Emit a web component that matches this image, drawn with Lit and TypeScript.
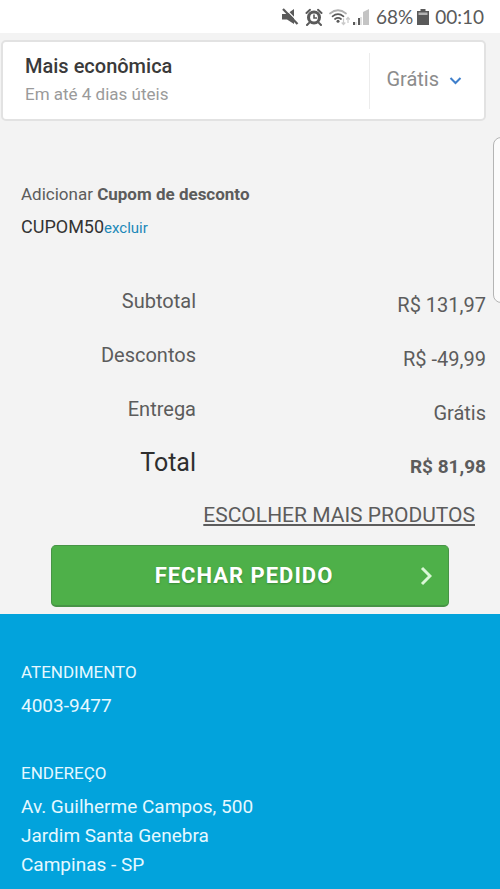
import { LitElement, html, css, svg } from "lit";
import { customElement, property } from "lit/decorators.js";
import { classMap } from "lit/directives/class-map.js";

interface SummaryLine {
  label: string;
  value: string;
  total?: boolean;
}

const LINES: SummaryLine[] = [
  { label: "Subtotal", value: "R$ 131,97" },
  { label: "Descontos", value: "R$ -49,99" },
  { label: "Entrega", value: "Grátis" },
  { label: "Total", value: "R$ 81,98", total: true },
];

const muteIcon = svg`
  <path d="M0 6h5l7-5v15l-7-4.500H0z" fill="#5a5a5a"/>
  <path d="M3 .5L17 14.500" stroke="#fff" stroke-width="1.200"/>
  <path d="M1 1l14.500 15" stroke="#5a5a5a" stroke-width="2.200"/>`;

const alarmIcon = svg`
  <circle cx="9" cy="9.500" r="7" fill="#5a5a5a"/>
  <path d="M1.500 5L5 1.800M16.500 5L13 1.800M4 15l-2 2M14 15l2 2" stroke="#5a5a5a" stroke-width="2" stroke-linecap="round"/>
  <circle cx="9" cy="9.500" r="3.900" fill="#fff"/>
  <path d="M9 6.500v3.500h3" stroke="#5a5a5a" stroke-width="1.600" fill="none"/>`;

const wifiIcon = svg`
  <g fill="none" stroke-width="1.700" stroke-linecap="round">
    <path d="M1 5.500Q9-1 17 5.500" stroke="#b0b0b0"/>
    <path d="M3.500 8.300Q9 3.800 14.500 8.300" stroke="#5a5a5a"/>
    <path d="M6 11Q9 8.600 12 11" stroke="#5a5a5a"/>
  </g>
  <circle cx="9" cy="13.300" r="1.500" fill="#5a5a5a"/>
  <path d="M14.500 10.500v5.500M12.700 14.500l1.800 2 1.800-2M19 15v-5.500M17.200 11.500l1.800-2 1.800 2" stroke="#cacaca" stroke-width="1.200" fill="none"/>`;

const signalIcon = svg`
  <path d="M0 14h2v3H0zM5 10h2v7H5z" fill="#5a5a5a"/>
  <path d="M2.500 14h1v3h-1zM7.500 9h1v8h-1z" fill="#c4c4c4"/>
  <path d="M10 4l6-3v16h-6z" fill="#c4c4c4"/>`;

const batteryIcon = svg`
  <path d="M3.500 1h5v2H12v14H0V3h3.500z" fill="#5a5a5a"/>
  <path d="M1.500 4.500h9V7h-9z" fill="#b4b4b4"/>`;

@customElement("status-bar")
export class StatusBar extends LitElement {
  static styles = css`
    :host {
      display: flex;
      justify-content: flex-end;
      align-items: center;
      box-sizing: border-box;
      height: 33px;
      padding-right: 16px;
      background: #fff;
      color: #5a5a5a;
      font: 19px/24px Lato, "Noto Sans", sans-serif;
    }
    .icon {
      flex: none;
      height: 18px;
      margin-right: 6px;
    }
    .tight {
      margin-right: 2px;
    }
    .level {
      margin-right: 4px;
    }
  `;

  render() {
    return html`
      <svg class="icon" width="17" height="18" viewBox="0 0 17 18" aria-hidden="true">${muteIcon}</svg>
      <svg class="icon" width="18" height="18" viewBox="0 0 18 18" aria-hidden="true">${alarmIcon}</svg>
      <svg class="icon tight" width="22" height="18" viewBox="0 0 22 18" aria-hidden="true">${wifiIcon}</svg>
      <svg class="icon" width="17" height="18" viewBox="0 0 17 18" aria-hidden="true">${signalIcon}</svg>
      <span class="level">68%</span>
      <svg class="icon" width="12" height="18" viewBox="0 0 12 18" aria-hidden="true">${batteryIcon}</svg>
      <time>00:10</time>
    `;
  }
}

@customElement("order-summary")
export class OrderSummary extends LitElement {
  @property({ attribute: false }) lines: SummaryLine[] = [];

  static styles = css`
    :host {
      display: block;
    }
    .lines {
      margin: 0;
    }
    .line {
      display: grid;
      grid-template-columns: 2fr 3fr;
      height: 54px;
      color: #5c5c5c;
      font-size: 20px;
      line-height: 24px;
      text-align: right;
    }
    .label {
      padding-right: 4px;
    }
    .value {
      margin: 0;
      padding: 4px 14px 0 0;
    }
    .total .label {
      color: #2e2e2e;
      font-size: 25px;
    }
    .total .value {
      font-size: 19px;
      font-weight: 700;
    }
  `;

  render() {
    return html`
      <dl class="lines">
        ${this.lines.map(
          (line) => html`
            <div class=${classMap({ line: true, total: !!line.total })}>
              <dt class="label">${line.label}</dt>
              <dd class="value">${line.value}</dd>
            </div>
          `
        )}
      </dl>
    `;
  }
}

@customElement("app-root")
export class AppRoot extends LitElement {
  static styles = css`
    :host {
      display: flex;
      flex-direction: column;
      position: relative;
      min-height: 100vh;
      overflow: hidden;
      background: #f3f3f3;
      color: #5c5c5c;
      font-family: Roboto, "Liberation Sans", sans-serif;
    }
    .shipping {
      display: flex;
      align-items: center;
      box-sizing: border-box;
      margin: 7px 14px 0 1px;
      padding: 10px 0;
      border: 2px solid #e2e2e2;
      border-radius: 5px;
      background: #fff;
    }
    .option {
      flex: 1;
      padding-left: 22px;
    }
    .name {
      margin: 0;
      color: #3a3a3a;
      font-size: 20px;
      line-height: 28px;
      font-weight: 500;
    }
    .term {
      margin: 0;
      font-size: 17px;
      line-height: 29px;
      color: #9a9a9a;
    }
    .price {
      display: flex;
      align-items: center;
      gap: 10px;
      height: 56px;
      padding: 0 22px 4px 16px;
      border: 0;
      border-left: 1px solid #ececec;
      background: none;
      color: #8c8c8c;
      font: inherit;
      font-size: 20px;
    }
    .chevron {
      margin-top: 4px;
    }
    .coupon {
      padding: 60px 21px 0;
    }
    .coupon-title {
      margin: 0;
      font-size: 17px;
      line-height: 26px;
      font-weight: 400;
    }
    .coupon-code {
      margin: 7px 0 0;
      color: #333;
      font-size: 18px;
      line-height: 26px;
    }
    .remove {
      color: #1c88b8;
      font-size: 15px;
      text-decoration: none;
    }
    .summary {
      margin-top: 48px;
    }
    .more {
      align-self: flex-end;
      margin: -3px 25px 0 0;
      color: #5c5c5c;
      font-size: 21px;
      line-height: 26px;
    }
    .submit {
      display: grid;
      grid-template-columns: 1fr auto 1fr;
      align-items: center;
      height: 62px;
      margin: 17px 51px 7px;
      padding: 0 16px 0 4px;
      border: 1px solid #479446;
      border-bottom-width: 2px;
      border-radius: 5px;
      background: #4eb049;
      color: #fff;
      font: inherit;
      font-size: 22px;
      font-weight: 700;
      letter-spacing: 1px;
      text-shadow: 0 1px 2px #3a8a37;
    }
    .submit-text {
      grid-column: 2;
    }
    .arrow {
      justify-self: end;
    }
    .footer {
      flex: 1;
      padding: 45px 21px 8px;
      background: #02a3dc;
      color: #e6f8ff;
    }
    .heading {
      margin: 0 0 6px;
      font-size: 17px;
      line-height: 26px;
      font-weight: 400;
    }
    .address,
    .phone {
      display: block;
      color: inherit;
      font-size: 19px;
      line-height: 29px;
      font-style: normal;
      text-decoration: none;
    }
    .phone {
      margin-bottom: 40px;
    }
    .edge-panel {
      position: absolute;
      top: 137px;
      right: -11px;
      width: 16px;
      height: 164px;
      border: 1px solid #b4b4b4;
      border-radius: 8px;
      background: #fbfbfb;
    }
  `;

  render() {
    return html`
      <status-bar></status-bar>
      <section class="shipping">
        <div class="option">
          <h2 class="name">Mais econômica</h2>
          <p class="term">Em até 4 dias úteis</p>
        </div>
        <button class="price" type="button" aria-haspopup="listbox">
          Grátis
          <svg class="chevron" width="13" height="9" viewBox="0 0 13 9" fill="none" stroke="#3f7fcb" stroke-width="2" aria-hidden="true">
            <path d="M1.500 2l5 5 5-5" />
          </svg>
        </button>
      </section>
      <section class="coupon">
        <h2 class="coupon-title">Adicionar <b>Cupom de desconto</b></h2>
        <p class="coupon-code">CUPOM50<a class="remove" href="#excluir">excluir</a></p>
      </section>
      <order-summary class="summary" .lines=${LINES}></order-summary>
      <a class="more" href="#produtos">ESCOLHER MAIS PRODUTOS</a>
      <button class="submit" type="button">
        <span class="submit-text">FECHAR PEDIDO</span>
        <svg class="arrow" width="12" height="20" viewBox="0 0 12 20" fill="none" stroke="#d9f7d6" stroke-width="3" aria-hidden="true">
          <path d="M2 2l8 8-8 8" />
        </svg>
      </button>
      <footer class="footer">
        <h3 class="heading">ATENDIMENTO</h3>
        <a class="phone" href="tel:40039477">4003-9477</a>
        <h3 class="heading">ENDEREÇO</h3>
        <address class="address">
          Av. Guilherme Campos, 500<br />Jardim Santa Genebra<br />Campinas - SP
        </address>
      </footer>
      <div class="edge-panel"></div>
    `;
  }
}
